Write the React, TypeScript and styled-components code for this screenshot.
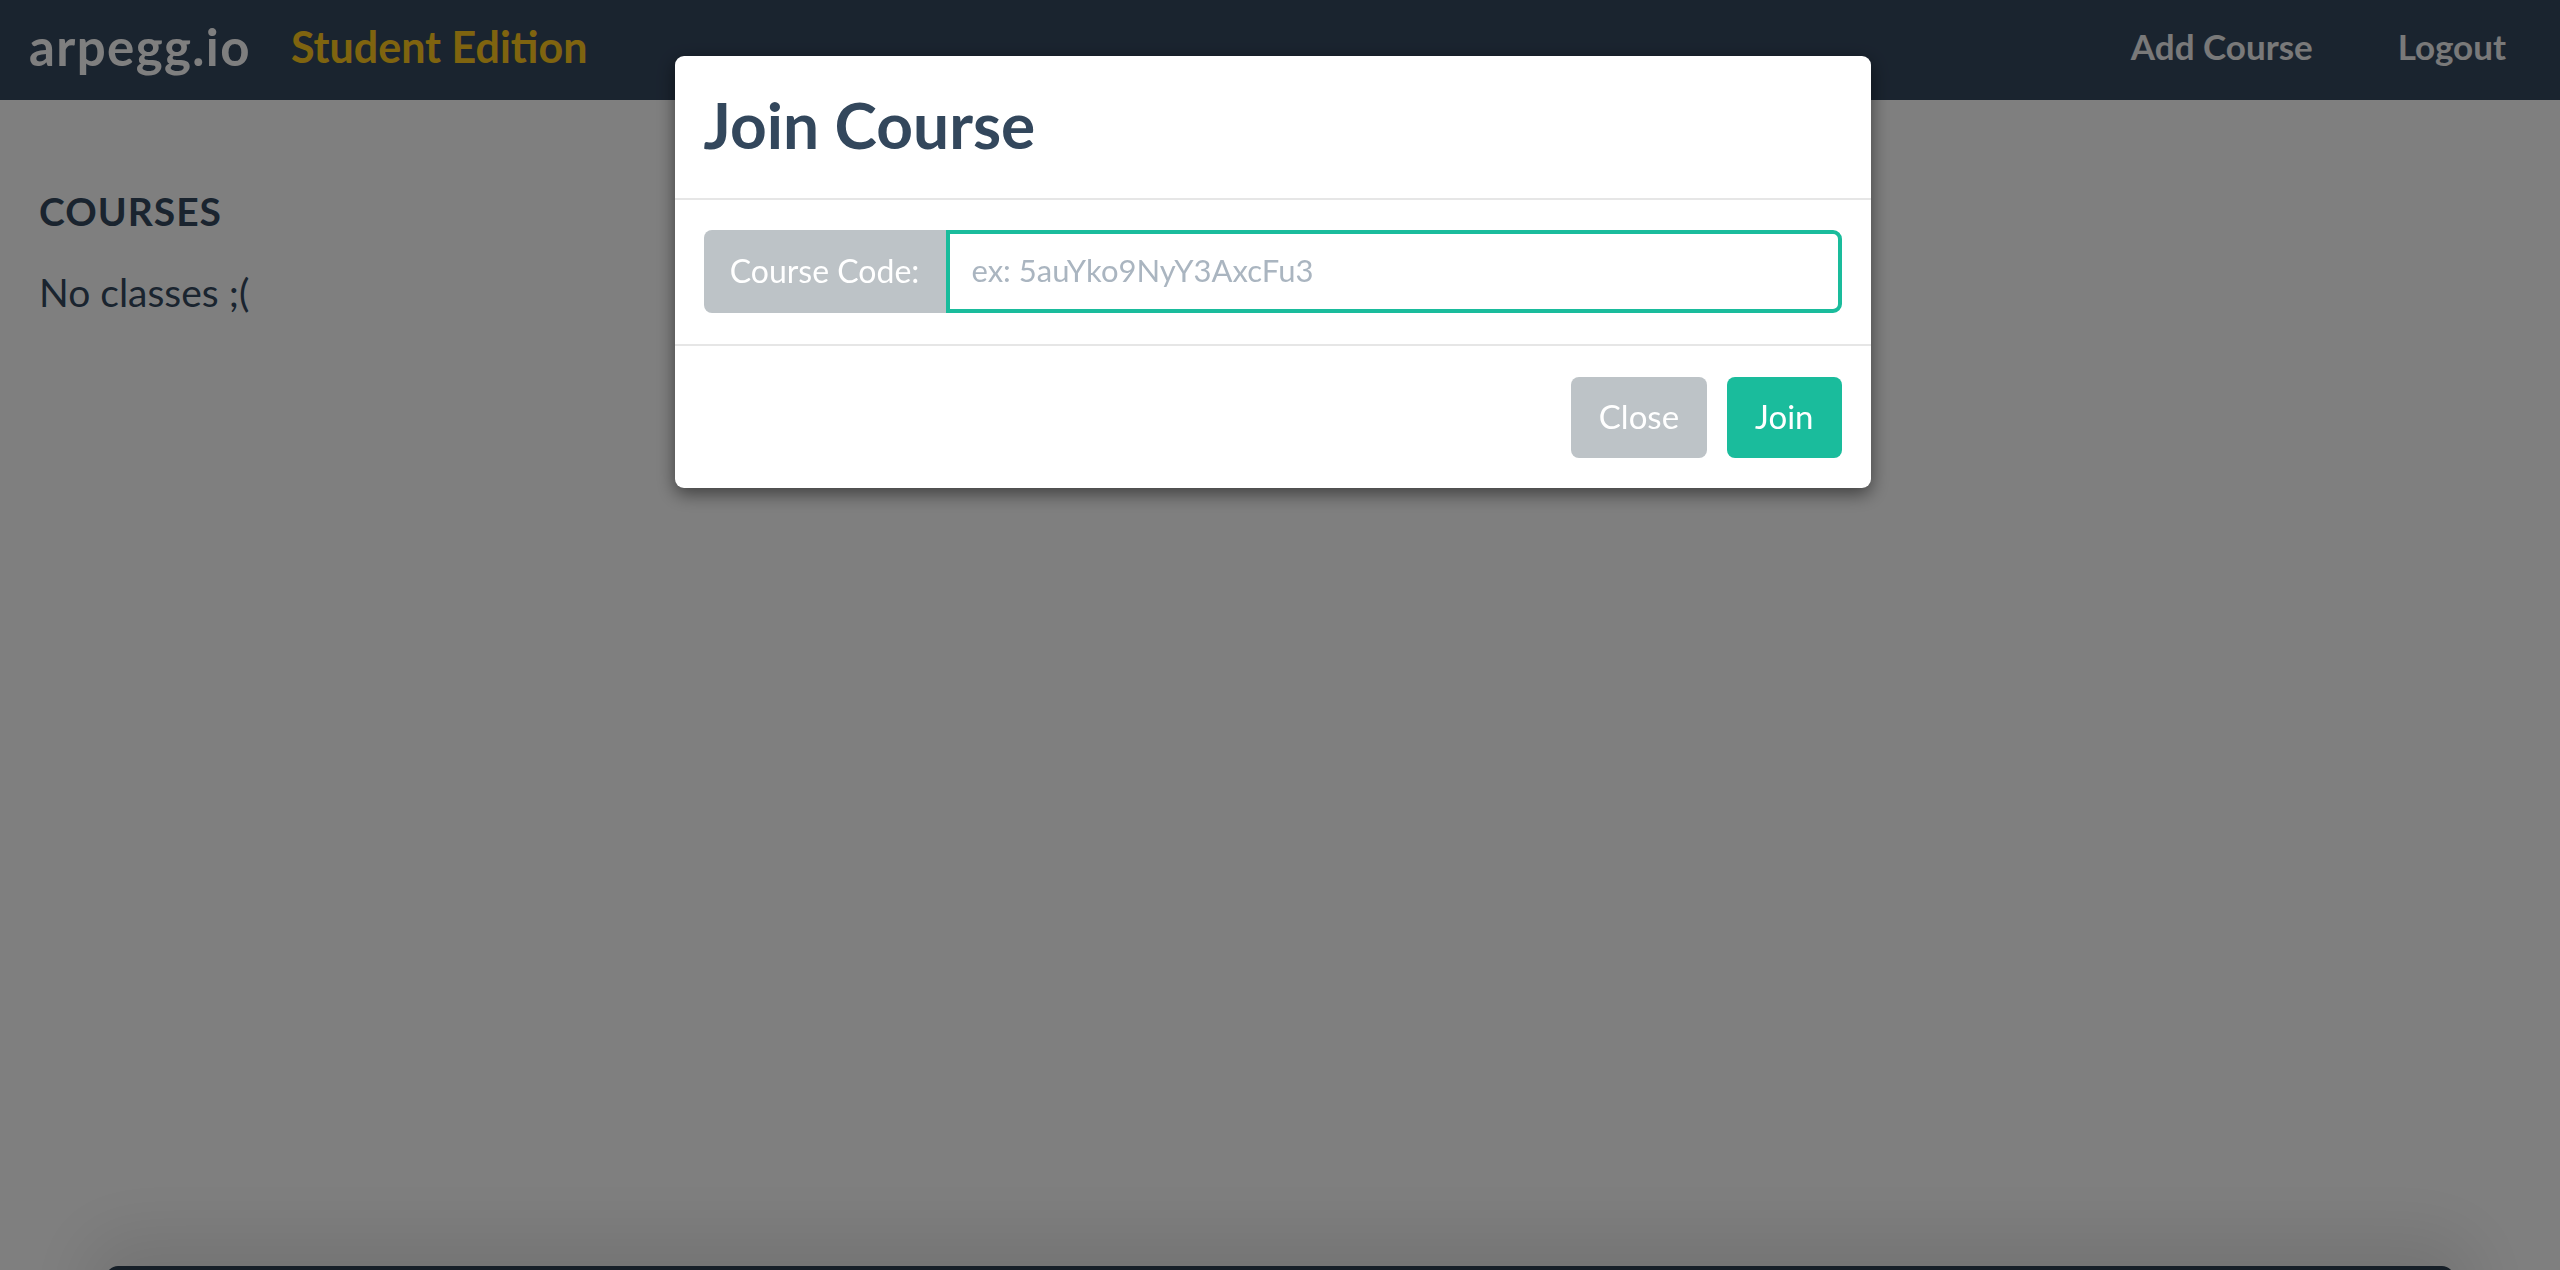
import React from 'react';
import styled, { createGlobalStyle } from 'styled-components';

const GlobalStyle = createGlobalStyle`
  html, body {
    margin: 0;
    padding: 0;
    height: 100%;
    overflow: hidden;
    background-color: #ffffff;
    font-family: Lato, 'Open Sans', sans-serif;
    color: #34495e;
  }
  * {
    box-sizing: border-box;
  }
`;

const Navbar = styled.nav`
    height: 100px;
    background-color: #35485f;
    display: flex;
    align-items: center;
    padding: 0 54px 8px 29px;
`;

const Brand = styled.a`
    color: #ffffff;
    font-size: 51px;
    font-weight: 700;
    letter-spacing: 1.4px;
    text-decoration: none;
    margin-right: 40px;
`;

const Edition = styled.span`
    color: #ffc91f;
    font-size: 43px;
    font-weight: 700;
`;

const NavLinks = styled.div`
    margin-left: auto;
    display: flex;
    gap: 85px;
`;

const NavLink = styled.a`
    color: #f2f2f2;
    font-size: 35px;
    font-weight: 700;
    text-decoration: none;
`;

const Main = styled.main`
    padding: 0 39px;
`;

const SectionTitle = styled.h2`
    margin: 88px 0 0;
    font-size: 39px;
    font-weight: 700;
    letter-spacing: 1px;
    line-height: 1.2;
`;

const EmptyText = styled.p`
    margin: 34px 0 0;
    font-size: 39px;
    font-weight: 400;
    line-height: 1.2;
`;

const BottomBar = styled.div`
    position: fixed;
    left: 106px;
    right: 106px;
    bottom: -76px;
    height: 80px;
    border-radius: 12px;
    background-color: #2c3e50;
    box-shadow: 0 -10px 70px 20px rgba(0, 0, 0, 0.1);
`;

const Backdrop = styled.div`
    position: fixed;
    inset: 0;
    background-color: rgba(0, 0, 0, 0.5);
    display: flex;
    justify-content: center;
    align-items: flex-start;
    padding: 56px 15px 0 0;
`;

const Dialog = styled.div`
    width: 1196px;
    background-color: #ffffff;
    border-radius: 9px;
    box-shadow: 0 6px 18px rgba(0, 0, 0, 0.5);
    overflow: hidden;
`;

const DialogHeader = styled.div`
    height: 144px;
    display: flex;
    align-items: center;
    padding: 0 29px 6px;
    border-bottom: 2px solid #e6e6e6;
`;

const DialogTitle = styled.h3`
    margin: 0;
    font-size: 64px;
    font-weight: 700;
    color: #33475c;
`;

const DialogBody = styled.div`
    padding: 30px 29px 31px;
    border-bottom: 2px solid #e6e6e6;
`;

const InputGroup = styled.div`
    display: flex;
    height: 83px;
`;

const InputLabel = styled.label`
    width: 242px;
    flex-shrink: 0;
    display: flex;
    align-items: center;
    justify-content: center;
    background-color: #bdc3c7;
    color: #ffffff;
    font-size: 32px;
    padding-bottom: 3px;
    border-radius: 8px 0 0 8px;
`;

const CodeInput = styled.input`
    flex: 1;
    min-width: 0;
    border: 4px solid #1abc9c;
    border-radius: 0 9px 9px 0;
    padding: 0 22px 3px;
    font-family: Lato, 'Open Sans', sans-serif;
    font-size: 31px;
    color: #34495e;
    outline: none;

    &::placeholder {
        color: #aab5c0;
    }
`;

const DialogFooter = styled.div`
    display: flex;
    justify-content: flex-end;
    gap: 20px;
    padding: 31px 29px 30px;
`;

const Button = styled.button<{ $variant: 'secondary' | 'success' }>`
    height: 81px;
    padding: 0 28px 4px;
    border: none;
    border-radius: 8px;
    font-family: Lato, 'Open Sans', sans-serif;
    font-size: 33px;
    color: #ffffff;
    background-color: ${props => (props.$variant === 'success' ? '#1abc9c' : '#bdc3c7')};
    cursor: pointer;
`;

const App: React.FC = () => {
    return (
        <>
            <GlobalStyle />
            <Navbar>
                <Brand href="#">arpegg.io</Brand>
                <Edition>Student Edition</Edition>
                <NavLinks>
                    <NavLink href="#">Add Course</NavLink>
                    <NavLink href="#">Logout</NavLink>
                </NavLinks>
            </Navbar>
            <Main>
                <SectionTitle>COURSES</SectionTitle>
                <EmptyText>No classes ;(</EmptyText>
            </Main>
            <BottomBar />
            <Backdrop>
                <Dialog>
                    <DialogHeader>
                        <DialogTitle>Join Course</DialogTitle>
                    </DialogHeader>
                    <DialogBody>
                        <InputGroup>
                            <InputLabel htmlFor="course-code">Course Code:</InputLabel>
                            <CodeInput id="course-code" placeholder="ex: 5auYko9NyY3AxcFu3" />
                        </InputGroup>
                    </DialogBody>
                    <DialogFooter>
                        <Button $variant="secondary">Close</Button>
                        <Button $variant="success">Join</Button>
                    </DialogFooter>
                </Dialog>
            </Backdrop>
        </>
    );
};

export default App;
